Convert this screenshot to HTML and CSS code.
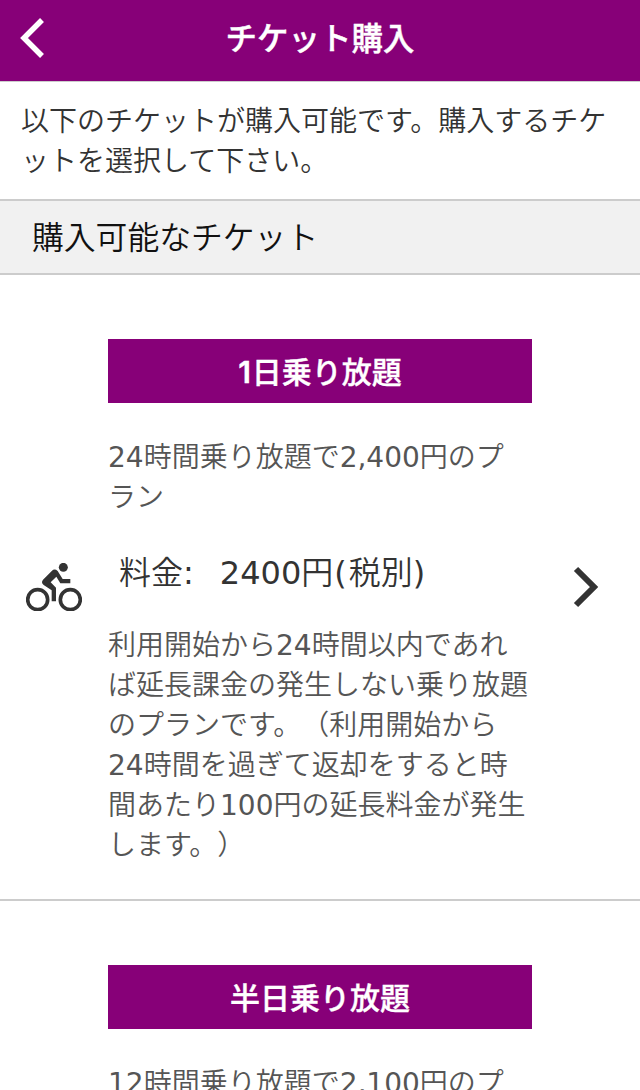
FILE: index.html
```html
<!DOCTYPE html>
<html lang="ja">
<head>
<meta charset="utf-8">
<title>チケット購入</title>
<link rel="stylesheet" href="styles.css">
</head>
<body>
<header class="header">
  <svg class="back" viewBox="0 0 24 40" aria-label="戻る"><path d="M22 2L4 20l18 18"/></svg>
  <h1 class="title">チケット購入</h1>
</header>
<p class="intro">以下のチケットが購入可能です。購入するチケットを選択して下さい。</p>
<h2 class="section">購入可能なチケット</h2>
<main>
  <article class="ticket">
    <svg class="bike" viewBox="48 68 168 145">
      <circle class="wheel" cx="83" cy="178" r="30"/>
      <circle class="wheel" cx="181" cy="178" r="30"/>
      <circle cx="160" cy="81" r="13.5"/>
      <path d="M99 118L126 91Q134 84 143 92L158 116H181V129H151L139 109L122 126L138 142V183H125V150L101 134Q92 127 99 118Z"/>
    </svg>
    <div class="content">
      <h3 class="badge"><span class="strong">1</span>日乗り放題</h3>
      <p class="summary"><span class="num">24</span>時間乗り放題で<span class="num">2,400</span>円のプラン</p>
      <p class="price"><span>料金<span class="num">:</span></span><span><span class="num">2400</span>円<span class="num paren">(</span>税別<span class="num">)</span></span></p>
      <p class="detail">利用開始から<span class="num">24</span>時間以内であれば延長課金の発生しない乗り放題のプランです。（利用開始から<span class="num">24</span>時間を過ぎて返却をすると時間あたり<span class="num">100</span>円の延長料金が発生します。）</p>
    </div>
    <svg class="next" viewBox="0 0 26 42"><path d="M3 3l18 18L3 39"/></svg>
  </article>
  <article class="ticket">
    <div class="content">
      <h3 class="badge">半日乗り放題</h3>
      <p class="summary"><span class="num">12</span>時間乗り放題で<span class="num">2,100</span>円のプラン</p>
    </div>
  </article>
</main>
</body>
</html>
```
FILE: styles.css
```css
* { box-sizing: border-box; margin: 0; }
html { height: 100%; overflow: hidden; }
body {
  height: 1090px;
  overflow: hidden;
  background: #fff;
  color: #333;
  font: 350 28px/40px "DejaVu Sans", "Noto Sans CJK JP", sans-serif;
  text-spacing-trim: space-all;
}
.num { font-weight: 400; }
.header {
  display: grid;
  grid-template-columns: 64px 1fr 64px;
  align-items: center;
  height: 82px;
  padding-bottom: 5px;
  background: #870078;
  border-bottom: 1px solid #ccc;
  color: #fff;
}
.back { width: 24px; height: 40px; margin-left: 20px; fill: none; stroke: #fff; stroke-width: 5.5; }
.title {
  padding-bottom: 4px;
  text-align: center;
  font: 500 31.5px/48px "Noto Sans CJK JP", sans-serif;
  -webkit-text-stroke: 0.4px #fff;
}
.intro { padding: 20px 20px 17px 21px; }
.section {
  height: 76px;
  padding: 1px 0 0 32px;
  border: solid #ccc;
  border-width: 2px 0;
  background: #f1f1f1;
  color: #111;
  font-size: 31.8px;
  font-weight: 350;
  line-height: 72px;
}
.ticket {
  display: grid;
  grid-template-columns: 108px 424px 108px;
  align-items: center;
  padding: 64px 0 33px;
  border-bottom: 2px solid #ccc;
}
.content { grid-column: 2; }
.bike { width: 56px; height: 48.3px; margin: 0 0 31px 26px; fill: #333; }
.wheel { fill: none; stroke: #333; stroke-width: 11; }
.next {
  width: 26px;
  height: 42px;
  margin: 0 0 31px 41px;
  fill: none;
  stroke: #333;
  stroke-width: 6;
}
.badge {
  height: 64px;
  margin-bottom: 35px;
  background: #870078;
  color: #fff;
  text-align: center;
  font: 500 30px/66px Inter, "Noto Sans CJK JP", sans-serif;
  -webkit-text-stroke: 0.4px #fff;
}
.strong { margin-right: 1px; font-weight: 600; }
.summary, .detail { color: #555; }
.summary { padding-right: 12px; }
.price { display: flex; gap: 26px; margin: 33px 0 31px 11px; font-size: 32px; line-height: 44px; }
.paren { margin: 0 2px 0 1px; }
```
